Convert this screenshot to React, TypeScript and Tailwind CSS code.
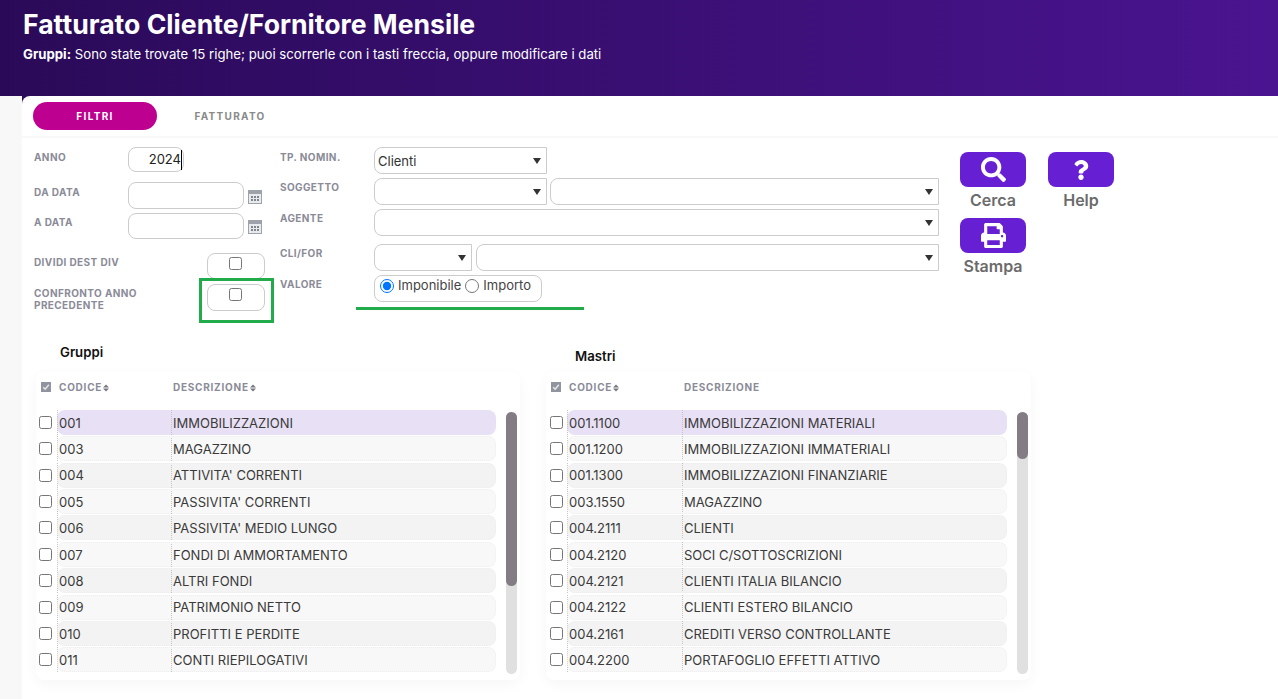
import { FaSearch, FaQuestion, FaPrint } from 'react-icons/fa'
import type { ReactNode } from 'react'

const gruppi = [
  ['001', 'IMMOBILIZZAZIONI'],
  ['003', 'MAGAZZINO'],
  ['004', "ATTIVITA' CORRENTI"],
  ['005', "PASSIVITA' CORRENTI"],
  ['006', "PASSIVITA' MEDIO LUNGO"],
  ['007', 'FONDI DI AMMORTAMENTO'],
  ['008', 'ALTRI FONDI'],
  ['009', 'PATRIMONIO NETTO'],
  ['010', 'PROFITTI E PERDITE'],
  ['011', 'CONTI RIEPILOGATIVI'],
]

const mastri = [
  ['001.1100', 'IMMOBILIZZAZIONI MATERIALI'],
  ['001.1200', 'IMMOBILIZZAZIONI IMMATERIALI'],
  ['001.1300', 'IMMOBILIZZAZIONI FINANZIARIE'],
  ['003.1550', 'MAGAZZINO'],
  ['004.2111', 'CLIENTI'],
  ['004.2120', 'SOCI C/SOTTOSCRIZIONI'],
  ['004.2121', 'CLIENTI ITALIA BILANCIO'],
  ['004.2122', 'CLIENTI ESTERO BILANCIO'],
  ['004.2161', 'CREDITI VERSO CONTROLLANTE'],
  ['004.2200', 'PORTAFOGLIO EFFETTI ATTIVO'],
]

function Label({ children, className = '' }: { children: ReactNode; className?: string }) {
  return (
    <div className={`text-[10px] font-bold leading-[12px] tracking-[0.04em] text-[#8b8b98] ${className}`}>
      {children}
    </div>
  )
}

function HeadLabel({ children }: { children: ReactNode }) {
  return <div className="text-[10px] font-bold leading-[12px] tracking-[0.075em] text-[#8b8b98]">{children}</div>
}

function Calendar({ className }: { className: string }) {
  return (
    <svg width="14" height="14" viewBox="0 0 14 14" className={`ml-[4px] shrink-0 ${className}`}>
      <rect x="0" y="0" width="14" height="14" fill="#9ea3ab" />
      <rect x="1" y="4" width="12" height="9" fill="#e9eaec" />
      <g fill="#7f858e">
        <rect x="3" y="6" width="2" height="2" />
        <rect x="6" y="6" width="2" height="2" />
        <rect x="9" y="6" width="2" height="2" />
        <rect x="3" y="9" width="2" height="2" />
        <rect x="6" y="9" width="2" height="2" />
        <rect x="9" y="9" width="2" height="2" />
      </g>
    </svg>
  )
}

function Select({ className, value }: { className: string; value?: string }) {
  return (
    <div className={`flex items-center justify-between rounded-l-[8px] border border-[#cccccc] pl-[3px] pr-[5px] text-[13px] text-[#333333] ${className}`}>
      <span className="pt-[2px]">{value}</span>
      <span className="h-0 w-0 border-x-[4px] border-t-[6px] border-x-transparent border-t-[#333333]" />
    </div>
  )
}

function ActionButton({ icon, label }: { icon: ReactNode; label: string }) {
  return (
    <div className="flex w-[66px] flex-col items-center">
      <div className="flex h-[35px] w-[66px] items-center justify-center rounded-[8px] bg-[#661fd3] text-[25px] text-white">
        {icon}
      </div>
      <div className="mt-[2px] text-[16px] font-semibold leading-[22px] text-[#6b6b6b]">{label}</div>
    </div>
  )
}

function SortIcon() {
  return (
    <svg width="8" height="8" viewBox="0 0 8 8" className="mt-[1px]">
      <path d="M4 0.5 7 3.6H1ZM4 7.5 1 4.4H7Z" fill="#77777f" />
    </svg>
  )
}

function DataTable({
  rows,
  sortDescription,
  thumbHeight,
  width,
  codeWidth,
  checkCell,
}: {
  rows: string[][]
  sortDescription: boolean
  thumbHeight: number
  width: string
  codeWidth: string
  checkCell: string
}) {
  return (
    <div className={`flex h-[308px] rounded-[8px] bg-white shadow-[0_4px_14px_rgba(0,0,0,0.04)] ${width}`}>
      <div className="flex-1">
        <div className="flex h-[38px] items-start pt-[9px]">
          <div className="flex w-[21px] justify-center pr-[1px] pt-[1px]">
            <div className="flex h-[10px] w-[10px] items-center justify-center bg-[#8f949e]">
              <svg width="8" height="8" viewBox="0 0 8 8">
                <path d="M1.2 4.2 3.2 6.2 6.8 1.8" fill="none" stroke="#e8e8ea" strokeWidth="1.5" />
              </svg>
            </div>
          </div>
          <div className={`flex items-center pl-[2px] ${codeWidth}`}>
            <HeadLabel>CODICE</HeadLabel>
            <SortIcon />
          </div>
          <div className="flex items-center pl-[2px]">
            <HeadLabel>DESCRIZIONE</HeadLabel>
            {sortDescription && <SortIcon />}
          </div>
        </div>
        {rows.map((row, i) => (
          <div key={row[0]} className="mb-[1.36px] flex h-[25px] items-center">
            <div className={`flex w-[21px] justify-center ${checkCell}`}>
              <input type="checkbox" readOnly className="h-[13px] w-[13px]" />
            </div>
            <div
              className={`flex h-full flex-1 items-center rounded-[8px] text-[13px] text-[#3a3a3a] ${
                i === 0
                  ? 'bg-[#e8e0f5]'
                  : i % 2 === 1
                    ? 'bg-[#f8f8f8] outline-1 -outline-offset-1 outline-dotted outline-[#eeeeee]'
                    : 'bg-[#f3f3f3] outline-1 -outline-offset-1 outline-dotted outline-[#eeeeee]'
              }`}
            >
              <div className={`flex h-full items-center border-l border-dotted border-[#c4c4c4] pl-[1px] pt-[2px] ${codeWidth}`}>
                {row[0]}
              </div>
              <div className="flex h-full items-center border-l border-dotted border-[#c4c4c4] pl-[1px] pt-[2px]">
                {row[1]}
              </div>
            </div>
          </div>
        ))}
      </div>
      <div className="ml-[10px] mr-[3px] mt-[40px] h-[262px] w-[11px] rounded-full bg-[#e0e0e0]">
        <div className="w-full rounded-full bg-[#847c84]" style={{ height: thumbHeight }} />
      </div>
    </div>
  )
}

export default function App() {
  return (
    <div className="relative h-[699px] w-full overflow-hidden bg-[#f8f8f8] font-['Inter',sans-serif]">
      <header className="h-[96px] bg-linear-to-r from-[#2a0a58] to-[#4a1490] pl-[23px] pt-[9px] text-white">
        <h1 className="text-[26.6px] font-bold leading-[30px]">Fatturato Cliente/Fornitore Mensile</h1>
        <p className="mt-[7px] text-[13.2px] leading-[16px]">
          <b>Gruppi:</b> Sono state trovate 15 righe; puoi scorrerle con i tasti freccia, oppure modificare i dati
        </p>
      </header>

      {/* purple showing behind the rounded corner of the panel */}
      <div className="absolute left-[22px] top-[96px] h-[8px] w-[8px] bg-[#2c0b5b]" />

      <main className="relative ml-[22px] h-[603px] rounded-tl-[8px] bg-white">
        <nav className="flex h-[42px] items-start border-b-2 border-[#f8f8f8] pl-[11px] pt-[6px]">
          <div className="flex h-[28px] w-[124px] items-center justify-center rounded-full bg-[#bd008f] text-[10px] font-bold tracking-[0.13em] text-white">
            FILTRI
          </div>
          <div className="flex h-[28px] w-[146px] items-center justify-center text-[10px] font-bold tracking-[0.13em] text-[#8a8a8a]">
            FATTURATO
          </div>
        </nav>

        <section className="flex h-[192px]">
          <div className="w-[258px] pl-[12px] pt-[9px]">
            <div className="flex h-[25px]">
              <Label className="mt-[4px] w-[94px]">ANNO</Label>
              <div className="flex h-[25px] w-[56px] items-center justify-end rounded-[8px] border border-[#cccccc] pr-[1px] pt-[1px] text-[13px] text-[#222222]">
                <span className="border-r border-black">2024</span>
              </div>
            </div>
            <div className="mt-[10px] flex h-[27px]">
              <Label className="mt-[4px] w-[94px]">DA DATA</Label>
              <input readOnly className="h-[27px] w-[116px] rounded-[8px] border border-[#cccccc]" />
              <Calendar className="mt-[8px]" />
            </div>
            <div className="mt-[4px] flex h-[26px]">
              <Label className="mt-[3px] w-[94px]">A DATA</Label>
              <input readOnly className="h-[26px] w-[116px] rounded-[8px] border border-[#cccccc]" />
              <Calendar className="mt-[7px]" />
            </div>
            <div className="mt-[14px] flex h-[26px]">
              <Label className="mt-[3px] w-[173px]">DIVIDI DEST DIV</Label>
              <div className="flex h-[26px] w-[58px] justify-center rounded-[8px] border border-[#cccccc] pr-[1px] pt-[3px]">
                <input type="checkbox" readOnly className="h-[13px] w-[13px]" />
              </div>
            </div>
            <div className="mt-[5px] flex h-[27px]">
              <Label className="mt-[3px] w-[173px]">
                CONFRONTO ANNO
                <br />
                PRECEDENTE
              </Label>
              <div className="flex h-[27px] w-[58px] justify-center rounded-[8px] border border-[#cccccc] pr-[1px] pt-[3px]">
                <input type="checkbox" readOnly className="h-[13px] w-[13px]" />
              </div>
            </div>
          </div>

          <div className="w-[680px] pt-[9px]">
            <div className="flex h-[27px]">
              <Label className="mt-[4px] w-[94px]">TP. NOMIN.</Label>
              <Select className="h-[27px] w-[173px]" value="Clienti" />
            </div>
            <div className="mt-[4px] flex h-[27px] gap-[3px]">
              <Label className="mt-[3px] w-[91px]">SOGGETTO</Label>
              <Select className="h-[27px] w-[173px]" />
              <Select className="h-[27px] w-[389px]" />
            </div>
            <div className="mt-[4px] flex h-[27px]">
              <Label className="mt-[3px] w-[94px]">AGENTE</Label>
              <Select className="h-[27px] w-[565px]" />
            </div>
            <div className="mt-[8px] flex h-[27px] gap-[4px]">
              <Label className="mt-[3px] w-[90px]">CLI/FOR</Label>
              <Select className="h-[27px] w-[98px]" />
              <Select className="h-[27px] w-[463px]" />
            </div>
            <div className="mt-[4px] flex h-[27px]">
              <Label className="mt-[3px] w-[94px]">VALORE</Label>
              <div className="flex h-[27px] w-[168px] items-start gap-[4px] rounded-[8px] border border-[#cccccc] pl-[5px] pt-[2px] text-[13px] leading-[15px] text-[#444444]">
                <label className="flex items-center gap-[4px]">
                  <input type="radio" name="valore" defaultChecked className="m-0 h-[14px] w-[14px]" />
                  Imponibile
                </label>
                <label className="flex items-center gap-[4px]">
                  <input type="radio" name="valore" className="m-0 h-[14px] w-[14px]" />
                  Importo
                </label>
              </div>
            </div>
          </div>

          <div className="flex gap-[22px] pt-[14px]">
            <div className="flex flex-col gap-[7px]">
              <ActionButton icon={<FaSearch />} label="Cerca" />
              <ActionButton icon={<FaPrint />} label="Stampa" />
            </div>
            <ActionButton icon={<FaQuestion className="text-[20px]" />} label="Help" />
          </div>
        </section>

        <section className="flex items-start pl-[14px]">
          <div className="w-[510px]">
            <h2 className="h-[42px] pl-[24px] pt-[15px] text-[13.2px] font-semibold leading-[14px] text-[#111111]">Gruppi</h2>
            <DataTable rows={gruppi} sortDescription thumbHeight={174} width="w-[484px]" codeWidth="w-[114px]" checkCell="pr-[3px]" />
          </div>
          <div>
            <h2 className="h-[42px] pl-[29px] pt-[19px] text-[13.2px] font-semibold leading-[14px] text-[#111111]">Mastri</h2>
            <DataTable rows={mastri} sortDescription={false} thumbHeight={47} width="w-[485px]" codeWidth="w-[115px]" checkCell="pr-[1px]" />
          </div>
        </section>
      </main>

      {/* review marks drawn on top of the form */}
      <div className="absolute left-[199px] top-[278px] h-[45px] w-[75px] border-[3px] border-[#22ab4b]" />
      <div className="absolute left-[356px] top-[307px] h-[3px] w-[228px] bg-[#22ab4b]" />
    </div>
  )
}
